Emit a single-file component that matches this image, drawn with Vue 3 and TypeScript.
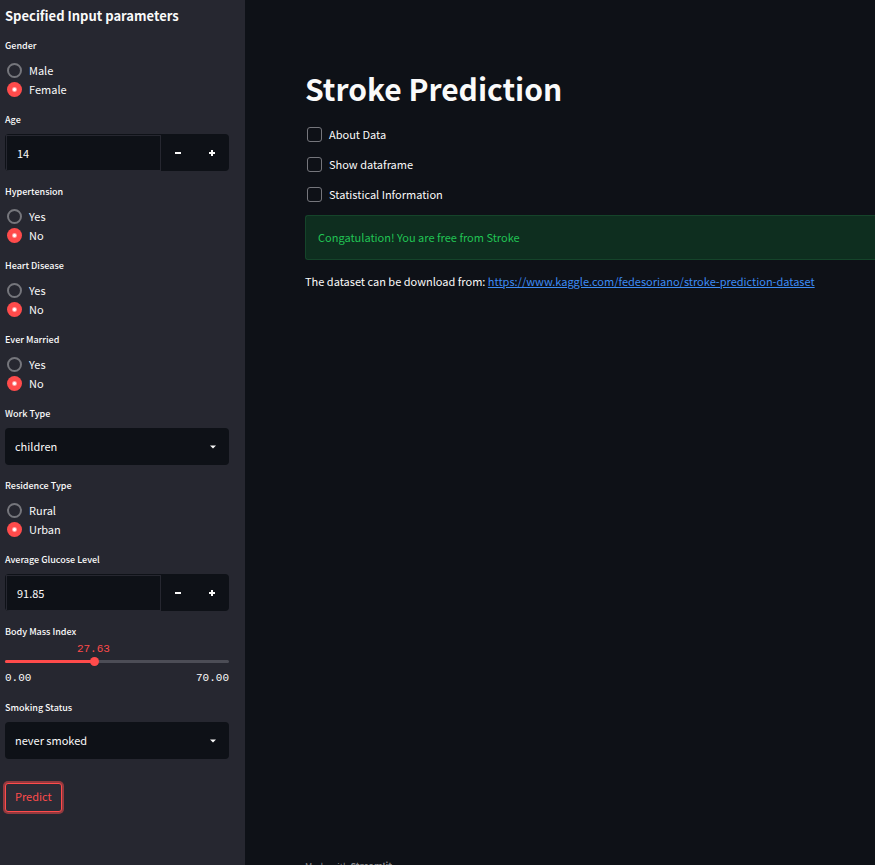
<script setup lang="ts">
import { computed, reactive, ref } from 'vue'

type Key = 'gender' | 'age' | 'hypertension' | 'heart' | 'married' | 'work' | 'residence' | 'glucose' | 'bmi' | 'smoking'

interface Field {
  key: Key
  label: string
  kind: 'radio' | 'number' | 'select' | 'slider'
  options?: string[]
  step?: number
}

const fields: Field[] = [
  { key: 'gender', label: 'Gender', kind: 'radio', options: ['Male', 'Female'] },
  { key: 'age', label: 'Age', kind: 'number', step: 1 },
  { key: 'hypertension', label: 'Hypertension', kind: 'radio', options: ['Yes', 'No'] },
  { key: 'heart', label: 'Heart Disease', kind: 'radio', options: ['Yes', 'No'] },
  { key: 'married', label: 'Ever Married', kind: 'radio', options: ['Yes', 'No'] },
  { key: 'work', label: 'Work Type', kind: 'select', options: ['children'] },
  { key: 'residence', label: 'Residence Type', kind: 'radio', options: ['Rural', 'Urban'] },
  { key: 'glucose', label: 'Average Glucose Level', kind: 'number', step: 0.01 },
  { key: 'bmi', label: 'Body Mass Index', kind: 'slider' },
  { key: 'smoking', label: 'Smoking Status', kind: 'select', options: ['never smoked'] },
]

const values = reactive<Record<string, string | number>>({
  gender: 'Female',
  age: 14,
  hypertension: 'No',
  heart: 'No',
  married: 'No',
  work: 'children',
  residence: 'Urban',
  glucose: 91.85,
  bmi: 27.63,
  smoking: 'never smoked',
})

const bmiMax = 70
const bmiPercent = computed(() => `${(Number(values.bmi) / bmiMax) * 100}%`)

const sections = ref([
  { id: 'about', label: 'About Data', open: false },
  { id: 'frame', label: 'Show dataframe', open: false },
  { id: 'stats', label: 'Statistical Information', open: false },
])

function bump(field: Field, direction: number): void {
  const next = Number(values[field.key]) + direction * (field.step ?? 1)
  values[field.key] = Math.round(next * 100) / 100
}
</script>

<template>
  <div class="app">
    <aside class="sidebar">
      <h2>Specified Input parameters</h2>
      <form @submit.prevent>
        <template v-for="field in fields" :key="field.key">
          <fieldset v-if="field.kind === 'radio'" class="field">
            <legend class="caption">{{ field.label }}</legend>
            <div class="radios">
              <label v-for="option in field.options" :key="option" class="choice">
                <input v-model="values[field.key]" type="radio" :name="field.key" :value="option" />
                {{ option }}
              </label>
            </div>
          </fieldset>

          <div v-else-if="field.kind === 'number'" class="field">
            <label class="caption" :for="field.key">{{ field.label }}</label>
            <div class="number">
              <input :id="field.key" v-model="values[field.key]" type="number" :step="field.step" />
              <button type="button" aria-label="Decrease" @click="bump(field, -1)">
                <svg viewBox="0 0 8 8" width="8" height="8"><path d="M1 4h6" /></svg>
              </button>
              <button type="button" aria-label="Increase" @click="bump(field, 1)">
                <svg viewBox="0 0 8 8" width="8" height="8"><path d="M1 4h6M4 1v6" /></svg>
              </button>
            </div>
          </div>

          <div v-else-if="field.kind === 'select'" class="field">
            <label class="caption" :for="field.key">{{ field.label }}</label>
            <div class="select">
              <select :id="field.key" v-model="values[field.key]">
                <option v-for="option in field.options" :key="option">{{ option }}</option>
              </select>
              <svg viewBox="0 0 6 4" width="6" height="4"><path d="M0 .5h6L3 3.5z" /></svg>
            </div>
          </div>

          <div v-else class="field">
            <label class="caption slider-caption" :for="field.key">{{ field.label }}</label>
            <div class="slider">
              <div class="value-row">
                <output :for="field.key" :style="{ left: bmiPercent }">{{ Number(values.bmi).toFixed(2) }}</output>
              </div>
              <div class="track">
                <div class="fill" :style="{ width: bmiPercent }"></div>
                <input :id="field.key" v-model.number="values.bmi" type="range" min="0" :max="bmiMax" step="0.01" />
              </div>
              <div class="bounds"><span>0.00</span><span>70.00</span></div>
            </div>
          </div>
        </template>
        <button class="predict" type="submit">Predict</button>
      </form>
    </aside>

    <main class="main">
      <h1>Stroke Prediction</h1>
      <div class="checks">
        <label v-for="section in sections" :key="section.id" class="check">
          <input v-model="section.open" type="checkbox" />
          {{ section.label }}
        </label>
      </div>
      <div class="alert" role="status">Congatulation! You are free from Stroke</div>
      <p>
        The dataset can be download from:
        <a href="https://www.kaggle.com/fedesoriano/stroke-prediction-dataset">https://www.kaggle.com/fedesoriano/stroke-prediction-dataset</a>
      </p>
      <footer>Made with <b>Streamlit</b></footer>
    </main>
  </div>
</template>

<style>
body {
  margin: 0;
  background: #0e1117;
}
</style>

<style scoped>
.app {
  display: flex;
  height: 100vh;
  overflow: hidden;
  color: #fafafa;
  font-family: "Noto Sans CJK SC", "Noto Sans", sans-serif;
  font-size: 11px;
  line-height: 17px;
}
.app * {
  box-sizing: border-box;
}
input,
select,
button {
  margin: 0;
  color: inherit;
  font: inherit;
}
.sidebar {
  flex: 0 0 245px;
  padding: 4px 16px 0 5px;
  background: #262730;
  overflow: hidden;
}
h2 {
  margin: 0 0 8px;
  font-size: 13px;
  font-weight: 700;
  line-height: 24px;
}
form {
  display: flex;
  flex-direction: column;
  gap: 11px;
}
.field {
  min-width: 0;
  margin: 0;
  padding: 0;
  border: 0;
}
.caption {
  display: block;
  padding: 0;
  margin-bottom: 4px;
  font-size: 9px;
  font-weight: 500;
  line-height: 20px;
}
.radios {
  padding-top: 1px;
}
.choice {
  display: flex;
  align-items: center;
  gap: 7px;
  height: 19px;
  padding-left: 2px;
}
.choice input {
  appearance: none;
  width: 15px;
  height: 15px;
  border: 2px solid #75767c;
  border-radius: 50%;
}
.choice input:checked {
  border: 0;
  background: radial-gradient(circle, #fff 0 1px, #ff4b4b 3px);
}
.number {
  display: flex;
  height: 37px;
  border-radius: 4px;
  background: #0e1117;
  overflow: hidden;
}
.number input {
  appearance: textfield;
  flex: 1;
  min-width: 0;
  margin: 1px 0 0 1px;
  padding: 0 10px;
  border: 1px solid #262730;
  background: transparent;
  outline: 0;
}
.number input::-webkit-inner-spin-button {
  appearance: none;
}
.number button {
  display: flex;
  align-items: center;
  justify-content: center;
  width: 34px;
  padding: 0;
  border: 0;
  background: transparent;
}
.number svg {
  fill: none;
  stroke: #fafafa;
  stroke-width: 2;
}
.select {
  display: flex;
  align-items: center;
  height: 37px;
  padding-right: 13px;
  border-radius: 4px;
  background: #0e1117;
}
.select select {
  appearance: none;
  flex: 1;
  height: 37px;
  padding: 0 10px;
  border: 0;
  background: transparent;
  outline: 0;
}
.select svg {
  fill: #fafafa;
}
.slider-caption {
  margin-bottom: 0;
}
.slider {
  font-family: "Liberation Mono", monospace;
  font-size: 11px;
}
.value-row {
  position: relative;
  height: 14px;
}
.value-row output {
  position: absolute;
  transform: translateX(-50%);
  color: #ff4b4b;
  line-height: 14px;
}
.track {
  position: relative;
  display: flex;
  align-items: center;
  height: 11px;
}
.track::before {
  content: "";
  flex: 1;
  height: 3px;
  border-radius: 2px;
  background: #4c4d56;
}
.fill {
  position: absolute;
  left: 0;
  height: 3px;
  border-radius: 2px;
  background: #ff4b4b;
}
.track input {
  appearance: none;
  position: absolute;
  inset: 0;
  width: 100%;
  height: 11px;
  background: transparent;
}
.track input::-webkit-slider-thumb {
  appearance: none;
  width: 9px;
  height: 9px;
  border-radius: 50%;
  background: #ff4b4b;
}
.bounds {
  display: flex;
  justify-content: space-between;
  height: 20px;
  line-height: 22px;
}
.predict {
  align-self: flex-start;
  height: 29px;
  margin-top: 13px;
  padding: 0 9px 2px;
  border: 1px solid #ff4b4b;
  border-radius: 3px;
  background: #2b2c36;
  color: #ff4b4b;
  box-shadow: 0 0 0 2px rgba(255, 75, 75, 0.5);
}
.main {
  display: flex;
  flex: 1;
  flex-direction: column;
  min-width: 0;
  padding: 66px 0 0 60px;
}
h1 {
  margin: 0 0 14px;
  font-size: 30px;
  font-weight: 700;
  line-height: 44px;
}
.checks {
  display: flex;
  flex-direction: column;
  align-items: flex-start;
  gap: 10px;
}
.check {
  display: flex;
  align-items: center;
  gap: 7px;
  height: 20px;
  padding-left: 2px;
  line-height: 18px;
}
.check input {
  appearance: none;
  width: 15px;
  height: 15px;
  border: 1px solid #75767c;
  border-radius: 3px;
}
.alert {
  margin-top: 11px;
  padding: 13px 12px;
  border: 1px solid #15442a;
  border-right: 0;
  border-radius: 3px 0 0 3px;
  background: #0e2e1f;
  color: #21c354;
}
p {
  margin: 13px 0 0;
}
a {
  color: #3d8cf5;
}
footer {
  margin: auto 0 -10px;
  color: #85868a;
  font-size: 9px;
}
</style>
